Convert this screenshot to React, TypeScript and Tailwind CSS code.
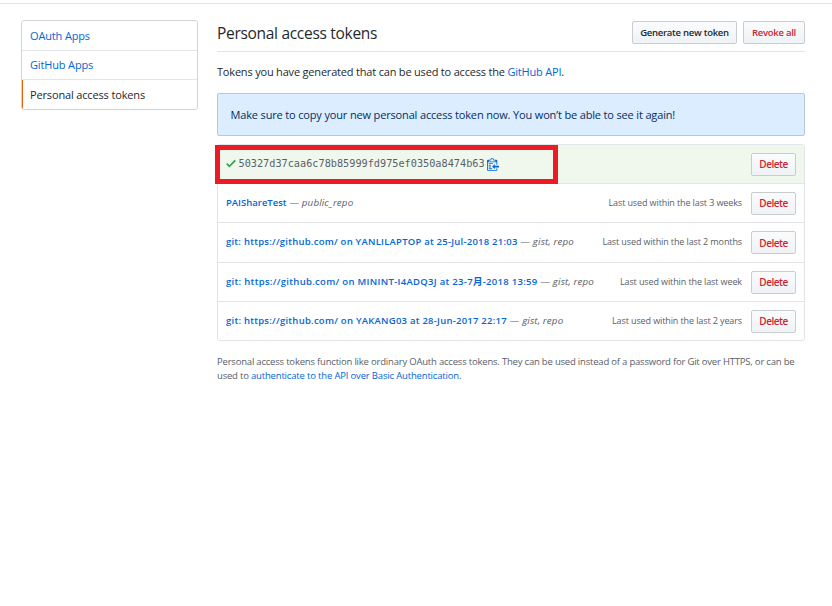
import type { ReactNode } from "react";

const tokens = [
  { name: "PAIShareTest", scopes: "public_repo", used: "Last used within the last 3 weeks", h: "h-[39px]", fit: "tracking-normal" },
  { name: "git: https://github.com/ on YANLILAPTOP at 25-Jul-2018 21:03", scopes: "gist, repo", used: "Last used within the last 2 months", h: "h-[40px]", fit: "tracking-[0.23px]" },
  { name: "git: https://github.com/ on MININT-I4ADQ3J at 23-7月-2018 13:59", scopes: "gist, repo", used: "Last used within the last week", h: "h-[39px]", fit: "tracking-[0.3px]" },
  { name: "git: https://github.com/ on YAKANG03 at 28-Jun-2017 22:17", scopes: "gist, repo", used: "Last used within the last 2 years", h: "h-[39px]", fit: "tracking-[0.24px]" },
];

function Button({ children, className }: { children: ReactNode; className: string }) {
  return (
    <button
      className={`flex h-[23px] shrink-0 items-center justify-center rounded-[2px] border border-[#c9cdd1] bg-linear-to-b from-[#fafbfc] to-[#eff3f6] font-semibold whitespace-nowrap ${className}`}
    >
      {children}
    </button>
  );
}

function CheckIcon() {
  return (
    <svg viewBox="0 0 12 16" className="mb-px h-[13px] w-[10px] shrink-0 fill-[#28a745]">
      <path d="M12 5l-8 8-4-4 1.5-1.5L4 10l6.5-6.5L12 5z" />
    </svg>
  );
}

function ClippyIcon() {
  return (
    <svg viewBox="0 0 14 16" className="mb-px h-[14px] w-[12px] shrink-0 fill-[#0366d6]">
      <path d="M2 13h4v1H2v-1zm5-6H2v1h5V7zm2 3V8l-3 3 3 3v-2h5v-2H9zM4.5 9H2v1h2.5V9zM2 12h2.5v-1H2v1zm9 1h1v2c-.02.28-.11.52-.3.7-.19.18-.42.28-.7.3H1c-.55 0-1-.45-1-1V4c0-.55.45-1 1-1h3c0-1.11.89-2 2-2 1.11 0 2 .89 2 2h3c.55 0 1 .45 1 1v5h-1V6H1v9h10v-2zM2 5h8c0-.55-.45-1-1-1H8c-.55 0-1-.45-1-1s-.45-1-1-1-1 .45-1 1-.45 1-1 1H3c-.55 0-1 .45-1 1z" />
    </svg>
  );
}

export default function App() {
  return (
    <div className="h-[606px] w-[832px] overflow-hidden bg-white pt-[3px] font-['Open_Sans','Noto_Sans_CJK_SC',sans-serif] text-[11px] leading-[17px] text-[#24292e]">
      <div className="h-px bg-[#e1e4e8]" />
      <div className="flex gap-[19px] pl-[21px]">
        <nav className="mt-4 flex h-[90px] w-[177px] flex-col overflow-hidden rounded-[3px] border border-[#d1d5da] tracking-[-0.15px]">
          <a className="flex h-[30px] items-center border-b border-[#e1e4e8] pl-2 text-[#0366d6]">OAuth Apps</a>
          <a className="flex h-[29px] items-center border-b border-[#e1e4e8] pb-px pl-2 text-[#0366d6]">GitHub Apps</a>
          <a className="flex h-[29px] items-center border-l border-[#e36209] pl-[7px]">Personal access tokens</a>
        </nav>

        <main className="w-[588px]">
          <header className="flex h-[48px] items-start border-b border-[#e1e4e8] pt-[17px]">
            <h1 className="mt-px flex-1 text-[15.5px] leading-[22px] tracking-[-0.3px]">Personal access tokens</h1>
            <Button className="mr-[6px] w-[105px] text-[9.5px] tracking-[-0.26px] text-[#24292e]">Generate new token</Button>
            <Button className="w-[62px] text-[9.5px] tracking-[-0.26px] text-[#cb2431]">Revoke all</Button>
          </header>

          <p className="mt-[11px] tracking-[-0.19px] whitespace-nowrap">
            Tokens you have generated that can be used to access the <a className="text-[#0366d6]">GitHub API</a>.
          </p>

          <div className="mt-[13px] flex h-[43px] items-center rounded-[2px] border border-[#b5c8dd] bg-[#dbedff] pl-[12.5px] tracking-[-0.155px] text-[#032f62]">
            Make sure to copy your new personal access token now. You won’t be able to see it again!
          </div>

          <section className="relative mt-2 h-[197px] rounded-[3px] border border-[#e1e4e8]">
            <ul>
              <li className="flex h-[39px] items-center border-b border-[#e1e4e8] bg-[#f0f8ed] pr-2 pl-[8px] text-[#586069]">
                <CheckIcon />
                <code className="mr-[2.5px] ml-[2.5px] pb-px font-['DejaVu_Sans_Mono',monospace] text-[10.22px]">50327d37caa6c78b85999fd975ef0350a8474b63</code>
                <ClippyIcon />
                <Button className="ml-auto w-[45px] pt-px text-[10px] tracking-[-0.5px] text-[#cb2431]">Delete</Button>
              </li>
              {tokens.map((t, i) => (
                <li key={t.name} className={`flex items-center pr-2 pl-2 whitespace-nowrap text-[#586069] ${t.h} ${i < 3 ? "border-b border-[#e1e4e8]" : ""}`}>
                  <div className="pb-[2px] text-[9.8px] tracking-[0.12px]">
                    <a className={`text-[9.5px] font-semibold text-[#0366d6] ${t.fit}`}>{t.name}</a> — <em>{t.scopes}</em>
                  </div>
                  <span className="mr-[9px] ml-auto pb-[2px] text-[9px] tracking-[-0.11px]">{t.used}</span>
                  <Button className={`w-[45px] text-[10px] tracking-[-0.5px] text-[#cb2431] ${i < 3 ? "pt-px" : "pt-0"}`}>Delete</Button>
                </li>
              ))}
            </ul>
            <div className="absolute top-0 -left-[3px] h-[39px] w-[343px] border-[5px] border-[#ed1c24]" />
          </section>

          <p className="mt-[14px] text-[9.5px] leading-[14px] tracking-[-0.2px] whitespace-nowrap text-[#586069]">
            Personal access tokens function like ordinary OAuth access tokens. They can be used instead of a password for Git over HTTPS, or can be
            <br />
            used to <a className="tracking-[-0.17px] text-[#0366d6]">authenticate to the API over Basic Authentication</a>.
          </p>
        </main>
      </div>
    </div>
  );
}
